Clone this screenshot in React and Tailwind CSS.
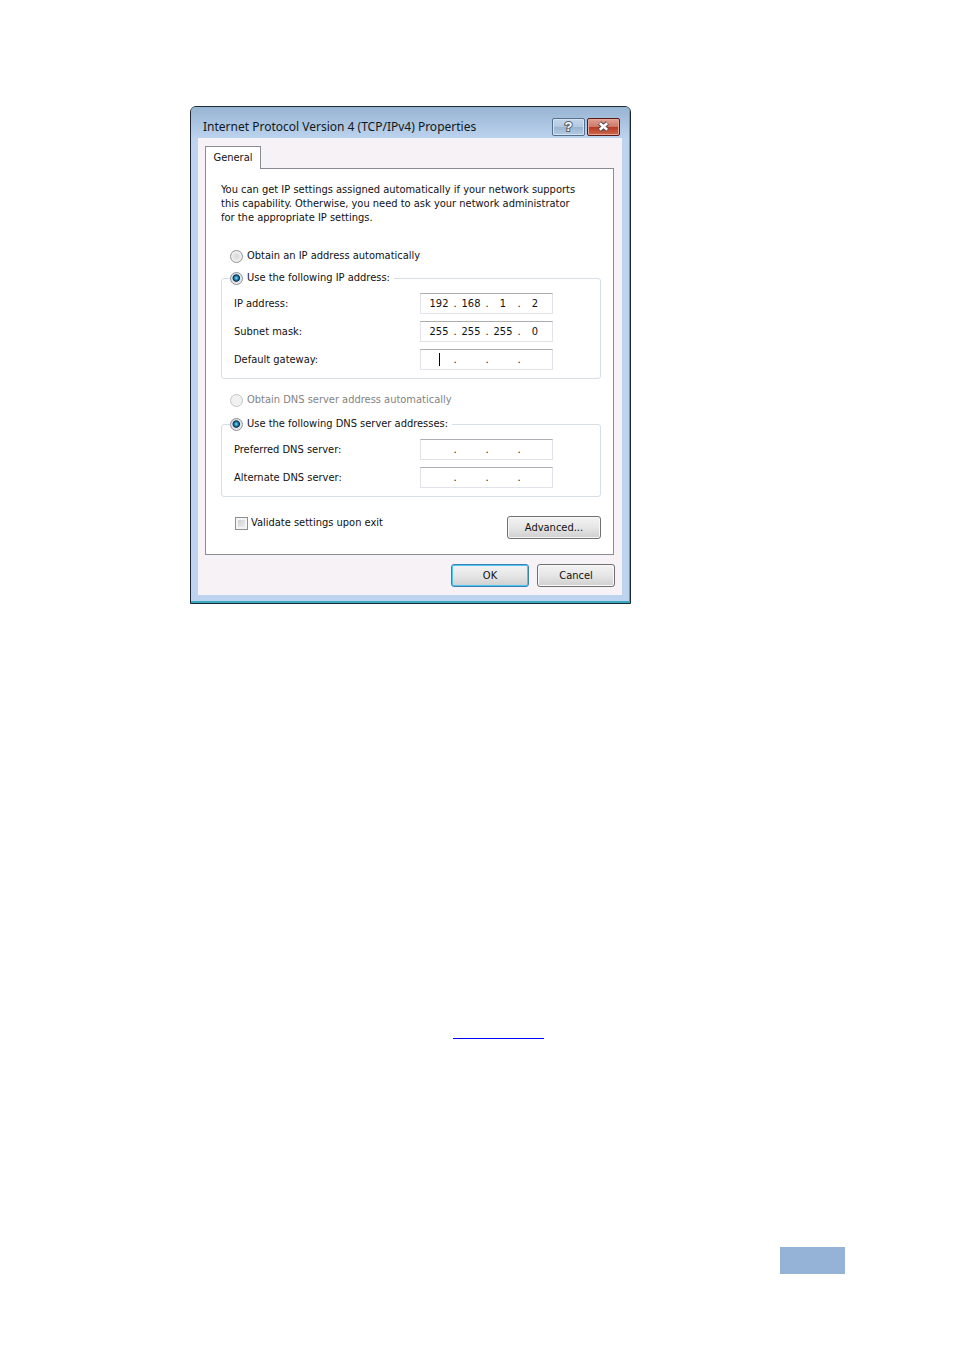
import { useState } from 'react'

const radioClass = "appearance-none shrink-0 w-[13px] h-[13px] rounded-full border border-[#8e8f8f] bg-[radial-gradient(circle,#d4d6d8_0,#e6e7e8_45%,#f4f4f4_70%)] checked:border-[#8b8f93] checked:bg-[radial-gradient(circle_at_48%_46%,#9fe4fa_0,#3a9cca_16%,#14618f_30%,#0c2f49_40%,#d9dee2_50%,#f0f1f2_75%)] disabled:border-[#c4c4c4] disabled:bg-[radial-gradient(circle,#f3f2f2_0,#f0f0f0_100%)]"

const buttonClass = "h-[23px] rounded-[3px] border bg-gradient-to-b from-[#f3f3f3] via-[#e6e6e6] to-[#cfcfcf] text-center"

function RadioOption({ name, label, checked, disabled, onChange }) {
    return (
        <label className={`flex items-center gap-1 h-[14px] ${disabled ? 'text-[#838383]' : ''}`}>
            <input
                type="radio"
                name={name}
                checked={checked}
                disabled={disabled}
                onChange={onChange}
                className={radioClass}
            />
            {label}
        </label>
    )
}

// four octets with a dot between them
function IpField({ label, value, caret }) {
    const [parts, setParts] = useState(value)

    function changePart(index, text) {
        setParts(parts.map((p, i) => (i === index ? text : p)))
    }

    return (
        <div role="group" aria-label={label} className="flex items-center justify-between">
            <span>{label}</span>
            <div className="relative flex items-center w-[133px] h-[21px] px-1 bg-white border border-[#e2e3ea] border-t-[#abadb3]">
                {parts.map((part, i) => (
                    <div key={i} className="flex items-center">
                        {i > 0 && <span className="w-1 text-center">.</span>}
                        <input
                            type="text"
                            aria-label={`${label} ${i + 1}`}
                            value={part}
                            maxLength={3}
                            onChange={(e) => changePart(i, e.target.value)}
                            className="w-7 h-4 text-center bg-transparent outline-none"
                        />
                    </div>
                ))}
                {caret && <span className="absolute left-[18px] top-[3px] w-px h-[13px] bg-black" />}
            </div>
        </div>
    )
}

function AddressGroup({ legend, name, checked, onChange, children }) {
    return (
        <fieldset className="min-w-0 border border-[#d5dfe5] rounded-[3px] pl-3 pr-[47px] pb-2">
            <legend className="-ml-1 pr-1">
                <RadioOption name={name} label={legend} checked={checked} onChange={onChange} />
            </legend>
            <div className="flex flex-col gap-[7px] pt-2">
                {children}
            </div>
        </fieldset>
    )
}

function TitleBar() {
    return (
        <header className="flex items-center justify-between h-[31px] pl-3 pr-[9px] pt-2 bg-gradient-to-b from-[#97b4d2] to-[#bcd3ee]">
            <h1 className="font-['Noto_Sans','Open_Sans',sans-serif] text-[12px] leading-4 text-[#101820] whitespace-nowrap">
                Internet Protocol Version 4 (TCP/IPv4) Properties
            </h1>
            <div className="flex gap-0.5">
                <button
                    type="button"
                    aria-label="Help"
                    className="w-[33px] h-[18px] rounded-[2px] border border-[#54708f] bg-[linear-gradient(#c3d6ea_0,#b4c9e0_48%,#9ab4d0_50%,#b3cae4_100%)] shadow-[inset_0_0_0_1px_#d5e3f1] font-['Liberation_Sans',sans-serif] text-[13px] leading-4 font-bold text-white [-webkit-text-stroke:2px_#56606e] [paint-order:stroke_fill]"
                >
                    ?
                </button>
                <button
                    type="button"
                    aria-label="Close"
                    className="flex items-center justify-center w-[33px] h-[18px] rounded-[2px] border border-[#5b1a17] bg-[linear-gradient(#dfa294_0,#cf7868_48%,#b93820_50%,#cd6a50_100%)] shadow-[inset_0_0_0_1px_#e5a797]"
                >
                    <svg width="13" height="11" viewBox="0 0 13 11">
                        <path d="M2.5 2 L10.5 9 M10.5 2 L2.5 9" stroke="#59414a" strokeWidth="4.6" />
                        <path d="M2.8 2.3 L10.2 8.7 M10.2 2.3 L2.8 8.7" stroke="#fff" strokeWidth="2.6" />
                    </svg>
                </button>
            </div>
        </header>
    )
}

function PropertiesDialog() {
    const [ipMode, setIpMode] = useState('manual')
    const [validate, setValidate] = useState(false)

    return (
        <section className="w-full max-w-[441px] rounded-t-[6px] border border-[#1d2a35] bg-[#bdd3ef] overflow-hidden font-['DejaVu_Sans_Condensed','DejaVu_Sans',sans-serif] text-[11px] leading-[14px] text-[#111]">
            <div className="border-r border-b-2 border-r-[#2fb0cf] border-b-[#39a9bd] pb-[6px]">
                <TitleBar />

                <div className="mx-[7px] pl-[7px] pr-[7px] pt-2 pb-2 bg-[#f6f2f6]">
                    {/* Tabs */}
                    <div role="tablist" className="flex">
                        <button
                            type="button"
                            role="tab"
                            aria-selected="true"
                            className="relative -mb-px w-14 h-[23px] border border-b-0 border-[#898c95] bg-white"
                        >
                            General
                        </button>
                    </div>

                    <div role="tabpanel" className="mr-px border border-[#898c95] bg-white pl-[15px] pr-3 pt-[14px] pb-[15px]">
                        <p className="whitespace-nowrap">
                            You can get IP settings assigned automatically if your network supports<br />
                            this capability. Otherwise, you need to ask your network administrator<br />
                            for the appropriate IP settings.
                        </p>

                        <div className="pl-[9px] mt-6 mb-2">
                            <RadioOption
                                name="ip"
                                label="Obtain an IP address automatically"
                                checked={ipMode === 'auto'}
                                onChange={() => setIpMode('auto')}
                            />
                        </div>
                        <AddressGroup
                            name="ip"
                            legend="Use the following IP address:"
                            checked={ipMode === 'manual'}
                            onChange={() => setIpMode('manual')}
                        >
                            <IpField label="IP address:" value={['192', '168', '1', '2']} />
                            <IpField label="Subnet mask:" value={['255', '255', '255', '0']} />
                            <IpField label="Default gateway:" value={['', '', '', '']} caret />
                        </AddressGroup>

                        <div className="pl-[9px] mt-[14px] mb-[10px]">
                            <RadioOption name="dns" label="Obtain DNS server address automatically" checked={false} disabled onChange={() => {}} />
                        </div>
                        <AddressGroup
                            name="dns"
                            legend="Use the following DNS server addresses:"
                            checked={true}
                            onChange={() => {}}
                        >
                            <IpField label="Preferred DNS server:" value={['', '', '', '']} />
                            <IpField label="Alternate DNS server:" value={['', '', '', '']} />
                        </AddressGroup>

                        <div className="flex items-start justify-between pl-[14px] mt-[19px]">
                            <label className="flex items-center gap-[3px] h-[14px]">
                                <input
                                    type="checkbox"
                                    checked={validate}
                                    onChange={(e) => setValidate(e.target.checked)}
                                    className="appearance-none w-[13px] h-[13px] border border-[#8e8f8f] bg-gradient-to-br from-[#c6cacf] to-[#f3f3f3] shadow-[inset_0_0_0_2px_#f4f4f4] checked:bg-[#2586b5]"
                                />
                                Validate settings upon exit
                            </label>
                            <button type="button" className={`${buttonClass} w-[94px] border-[#707070] shadow-[inset_0_0_0_1px_#f8f8f8]`}>Advanced...</button>
                        </div>
                    </div>

                    <div className="flex justify-end gap-2 mt-[9px]">
                        <button type="button" className={`${buttonClass} w-[78px] border-[#3c7fb1] shadow-[inset_0_0_0_1px_#48c8f3]`}>OK</button>
                        <button type="button" className={`${buttonClass} w-[78px] border-[#707070] shadow-[inset_0_0_0_1px_#f8f8f8]`}>Cancel</button>
                    </div>
                </div>
            </div>
        </section>
    )
}

export default function App() {
    return (
        <main className="bg-white pt-[106px] pb-20">
            <div className="pl-[190px]">
                <PropertiesDialog />
            </div>

            <div className="flex pl-[453px] mt-[420px]">
                <a href="#" aria-label="Link" className="w-[91px] h-[15px] border-b border-[#0000ff]" />
            </div>

            <footer className="flex justify-end pr-[109px] mt-52">
                <div className="w-[65px] h-[27px] bg-[#95b3d7]" />
            </footer>
        </main>
    )
}
